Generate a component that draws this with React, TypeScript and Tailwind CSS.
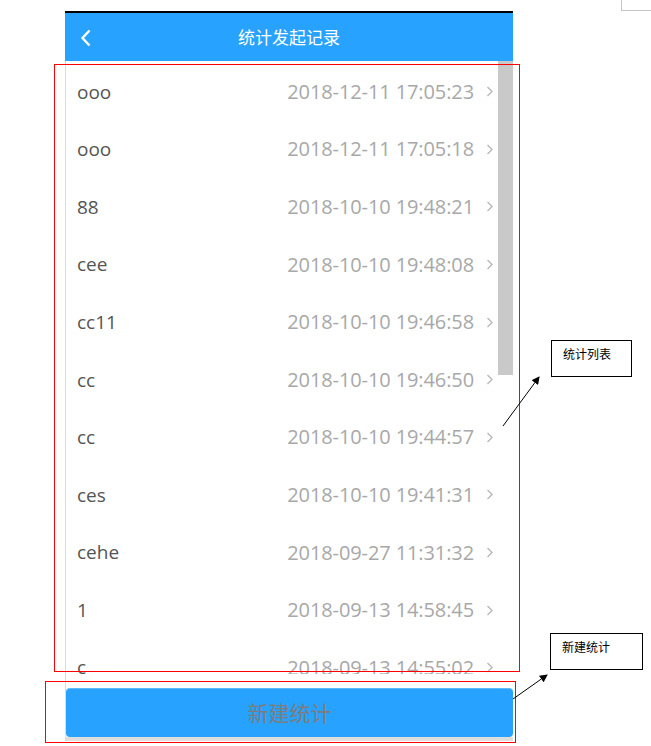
import React from "react";

type Record = {
  name: string;
  time: string;
};

const records: Record[] = [
  { name: "ooo", time: "2018-12-11 17:05:23" },
  { name: "ooo", time: "2018-12-11 17:05:18" },
  { name: "88", time: "2018-10-10 19:48:21" },
  { name: "cee", time: "2018-10-10 19:48:08" },
  { name: "cc11", time: "2018-10-10 19:46:58" },
  { name: "cc", time: "2018-10-10 19:46:50" },
  { name: "cc", time: "2018-10-10 19:44:57" },
  { name: "ces", time: "2018-10-10 19:41:31" },
  { name: "cehe", time: "2018-09-27 11:31:32" },
  { name: "1", time: "2018-09-13 14:58:45" },
  { name: "c", time: "2018-09-13 14:55:02" },
];

function Chevron() {
  return (
    <svg width="8" height="11" viewBox="0 0 8 11" className="shrink-0">
      <polyline points="1.5,1 6,5.5 1.5,10" fill="none" stroke="#b8b8b8" strokeWidth="1.4" />
    </svg>
  );
}

function RecordRow({ record }: { record: Record }) {
  return (
    <div className="h-[57.6px] flex items-center pl-[11px] pr-[19px]">
      <span className="text-[19px] text-[#555555] flex-1">{record.name}</span>
      <span className="text-[20px] text-[#a8a8a8] mr-[12px] tracking-[-0.1px]">{record.time}</span>
      <Chevron />
    </div>
  );
}

function Annotation({ label, className }: { label: string; className: string }) {
  return (
    <div className={`absolute border border-black bg-white text-[12px] text-black pl-[11px] pt-[5px] ${className}`}>
      {label}
    </div>
  );
}

export default function App() {
  return (
    <div className="relative w-[651px] h-[746px] bg-white overflow-hidden font-['Open_Sans','Noto_Sans_CJK_SC',sans-serif]">
      <div className="ml-[65px] pt-[11px] w-[448px] flex flex-col">
        <div className="relative h-[50px] border-t-2 border-black bg-[#27a3ff] flex items-center justify-center">
          <svg width="12" height="18" viewBox="0 0 12 18" className="absolute left-[15px] top-[16px]">
            <polyline points="9.5,1.5 2.5,9 9.5,16.5" fill="none" stroke="#ffffff" strokeWidth="2.4" />
          </svg>
          <span className="text-[17px] text-white font-['Noto_Sans_CJK_SC',sans-serif]">统计发起记录</span>
        </div>

        <div className="relative h-[613px] pt-[2px] overflow-hidden border-l border-[#dcdcdc]">
          {records.map((r, i) => (
            <RecordRow key={i} record={r} />
          ))}
          <div className="absolute right-0 top-0 w-[15px] h-[314px] bg-[#c9c9c9]" />
        </div>

        <div className="border-l border-[#dcdcdc] pt-[14px] border-b-4 border-b-[#dedede]">
          <button className="w-full h-[49px] rounded-[4px] bg-[#27a3ff] border-t border-[#5cbcff] text-[21px] text-[#7c7c7c] font-['Noto_Sans_CJK_SC',sans-serif]">
            新建统计
          </button>
        </div>
      </div>

      {/* corner mark */}
      <div className="absolute left-[621px] top-0 w-[30px] h-[11px] border-l border-b border-[#c4c4c4]" />

      {/* red highlight frames */}
      <div className="absolute left-[54px] top-[64px] w-[466px] h-[608px] border border-[#ff0000]" />
      <div className="absolute left-[45px] top-[681px] w-[471px] h-[62px] border border-[#ff0000]" />

      {/* callouts */}
      <Annotation label="统计列表" className="left-[551px] top-[340px] w-[81px] h-[37px]" />
      <Annotation label="新建统计" className="left-[550px] top-[633px] w-[93px] h-[37px]" />

      <svg className="absolute inset-0 pointer-events-none" width="651" height="746">
        <defs>
          <marker id="head" markerWidth="8" markerHeight="8" refX="7" refY="4" orient="auto" markerUnits="userSpaceOnUse">
            <path d="M0,0 L8,4 L0,8 z" fill="#000" />
          </marker>
        </defs>
        <line x1="503" y1="426" x2="539" y2="377" stroke="#000" strokeWidth="1" markerEnd="url(#head)" />
        <line x1="513" y1="699" x2="547" y2="675" stroke="#000" strokeWidth="1" markerEnd="url(#head)" />
      </svg>
    </div>
  );
}
